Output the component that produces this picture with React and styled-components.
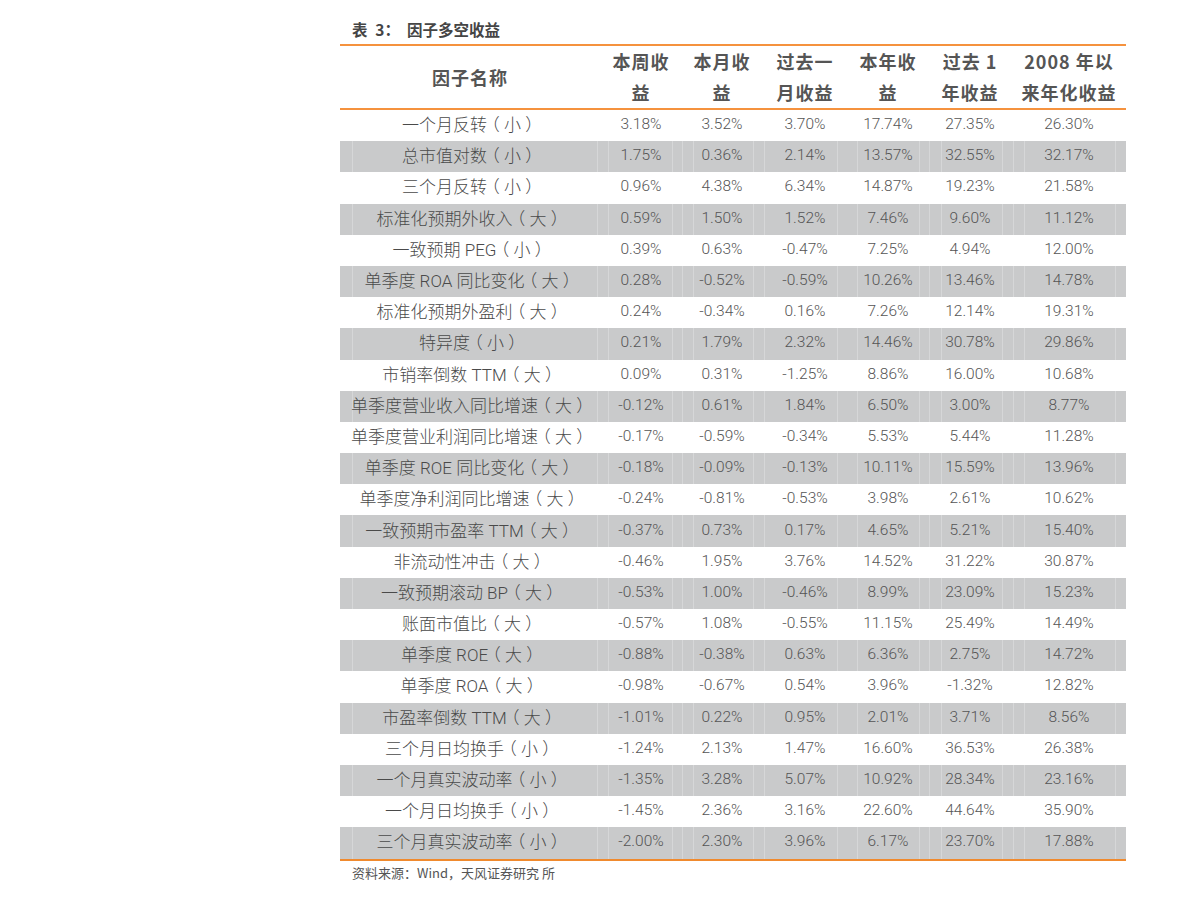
import React from "react";
import styled, { createGlobalStyle } from "styled-components";

const GlobalStyle = createGlobalStyle`
  body {
    margin: 0;
    background: #fff;
    font-family: "Roboto", "Noto Sans CJK SC", sans-serif;
  }
`;

// faint inner cell lines seen in the grey rows (x offsets from table left)
const faintLines = [12, 257, 268, 332, 342, 353, 413, 424, 497, 517, 579, 589, 601, 662, 673, 684, 775];
const lineGradient = faintLines
  .map((x) => `linear-gradient(#d6d7d8, #d6d7d8) ${x}px 0 / 1px 100% no-repeat`)
  .join(", ");

const Page = styled.div`
  padding: 18px 0 0 340px;
  width: 786px;
`;

const Title = styled.div`
  font-family: "Noto Sans CJK SC", sans-serif;
  font-weight: 700;
  font-size: 15.5px;
  line-height: 22px;
  height: 24px;
  color: #454545;
  padding-left: 12px;
  margin-bottom: 2px;
  white-space: pre;
`;

// full-width punctuation: one em of advance, half-width glyph centred in it
const Paren = styled.span`
  display: inline-block;
  width: 1em;
  text-align: center;
  font-feature-settings: "halt" 1;
`;

// colon / comma keep their glyph at the left of the box
const Stop = styled.span`
  display: inline-block;
  width: ${(p) => p.$w || "1em"};
  text-align: left;
`;

const Table = styled.div`
  border-top: 2px solid #f5923e;
  border-bottom: 2px solid #f08a2e;
`;

const Grid = styled.div`
  display: grid;
  grid-template-columns: 260px 82px 80px 86px 80px 84px 114px;
`;

const HeadRow = styled(Grid)`
  height: 62px;
  border-bottom: 2px solid #f5923e;
`;

const HeadCell = styled.div`
  display: flex;
  align-items: center;
  justify-content: center;
  text-align: center;
  padding-bottom: 4px;
  font-family: "Noto Sans CJK SC", sans-serif;
  font-weight: 700;
  font-size: 18px;
  letter-spacing: 1px;
  line-height: 31px;
  color: #555;
  white-space: pre-line;
`;

const Row = styled(Grid)`
  height: 31.2px;
  background: ${(p) => (p.$shade ? `${lineGradient}, #c9cacb` : "#fff")};
`;

const NameCell = styled.div`
  display: flex;
  align-items: center;
  justify-content: center;
  padding-bottom: 4px;
  font-family: "Roboto", "Noto Sans CJK SC", sans-serif;
  font-weight: 300;
  font-size: 17px;
  color: #4a4a4a;
  white-space: pre;
`;

const NumCell = styled.div`
  display: flex;
  align-items: center;
  justify-content: center;
  padding-bottom: 3px;
  font-family: "Roboto", sans-serif;
  font-weight: 300;
  font-size: 15.5px;
  color: #555;
`;

const Source = styled.div`
  font-family: "Noto Sans CJK SC", sans-serif;
  font-size: 13px;
  color: #555;
  padding: 2px 0 0 12px;
  line-height: 20px;
  white-space: pre;
`;

const headers = ["因子名称", "本周收\n益", "本月收\n益", "过去一\n月收益", "本年收\n益", "过去 1\n年收益", "2008 年以\n来年化收益"];

const rows = [
  ["一个月反转（小）", "3.18%", "3.52%", "3.70%", "17.74%", "27.35%", "26.30%"],
  ["总市值对数（小）", "1.75%", "0.36%", "2.14%", "13.57%", "32.55%", "32.17%"],
  ["三个月反转（小）", "0.96%", "4.38%", "6.34%", "14.87%", "19.23%", "21.58%"],
  ["标准化预期外收入（大）", "0.59%", "1.50%", "1.52%", "7.46%", "9.60%", "11.12%"],
  ["一致预期 PEG（小）", "0.39%", "0.63%", "-0.47%", "7.25%", "4.94%", "12.00%"],
  ["单季度 ROA 同比变化（大）", "0.28%", "-0.52%", "-0.59%", "10.26%", "13.46%", "14.78%"],
  ["标准化预期外盈利（大）", "0.24%", "-0.34%", "0.16%", "7.26%", "12.14%", "19.31%"],
  ["特异度（小）", "0.21%", "1.79%", "2.32%", "14.46%", "30.78%", "29.86%"],
  ["市销率倒数 TTM（大）", "0.09%", "0.31%", "-1.25%", "8.86%", "16.00%", "10.68%"],
  ["单季度营业收入同比增速（大）", "-0.12%", "0.61%", "1.84%", "6.50%", "3.00%", "8.77%"],
  ["单季度营业利润同比增速（大）", "-0.17%", "-0.59%", "-0.34%", "5.53%", "5.44%", "11.28%"],
  ["单季度 ROE 同比变化（大）", "-0.18%", "-0.09%", "-0.13%", "10.11%", "15.59%", "13.96%"],
  ["单季度净利润同比增速（大）", "-0.24%", "-0.81%", "-0.53%", "3.98%", "2.61%", "10.62%"],
  ["一致预期市盈率 TTM（大）", "-0.37%", "0.73%", "0.17%", "4.65%", "5.21%", "15.40%"],
  ["非流动性冲击（大）", "-0.46%", "1.95%", "3.76%", "14.52%", "31.22%", "30.87%"],
  ["一致预期滚动 BP（大）", "-0.53%", "1.00%", "-0.46%", "8.99%", "23.09%", "15.23%"],
  ["账面市值比（大）", "-0.57%", "1.08%", "-0.55%", "11.15%", "25.49%", "14.49%"],
  ["单季度 ROE（大）", "-0.88%", "-0.38%", "0.63%", "6.36%", "2.75%", "14.72%"],
  ["单季度 ROA（大）", "-0.98%", "-0.67%", "0.54%", "3.96%", "-1.32%", "12.82%"],
  ["市盈率倒数 TTM（大）", "-1.01%", "0.22%", "0.95%", "2.01%", "3.71%", "8.56%"],
  ["三个月日均换手（小）", "-1.24%", "2.13%", "1.47%", "16.60%", "36.53%", "26.38%"],
  ["一个月真实波动率（小）", "-1.35%", "3.28%", "5.07%", "10.92%", "28.34%", "23.16%"],
  ["一个月日均换手（小）", "-1.45%", "2.36%", "3.16%", "22.60%", "44.64%", "35.90%"],
  ["三个月真实波动率（小）", "-2.00%", "2.30%", "3.96%", "6.17%", "23.70%", "17.88%"],
];

// wrap full-width punctuation so each keeps a full em of width
function wide(text, colonWidth) {
  return text.split(/([（）：，])/).map((part, i) => {
    if (part === "（" || part === "）") return <Paren key={i}>{part}</Paren>;
    if (part === "：") return <Stop key={i} $w={colonWidth}>{part}</Stop>;
    if (part === "，") return <Stop key={i}>{part}</Stop>;
    return part;
  });
}

export default function App() {
  return (
    <>
      <GlobalStyle />
      <Page>
        <Title>{wide("表\u20023：因子多空收益", "1.45em")}</Title>
        <Table>
          <HeadRow>
            {headers.map((h) => (
              <HeadCell key={h}>{h}</HeadCell>
            ))}
          </HeadRow>
          {rows.map((r, i) => (
            <Row key={r[0]} $shade={i % 2 === 1}>
              <NameCell>{wide(r[0])}</NameCell>
              {r.slice(1).map((v, j) => (
                <NumCell key={j}>{v}</NumCell>
              ))}
            </Row>
          ))}
        </Table>
        <Source>{wide("资料来源：Wind，天风证券研究 所")}</Source>
      </Page>
    </>
  );
}
